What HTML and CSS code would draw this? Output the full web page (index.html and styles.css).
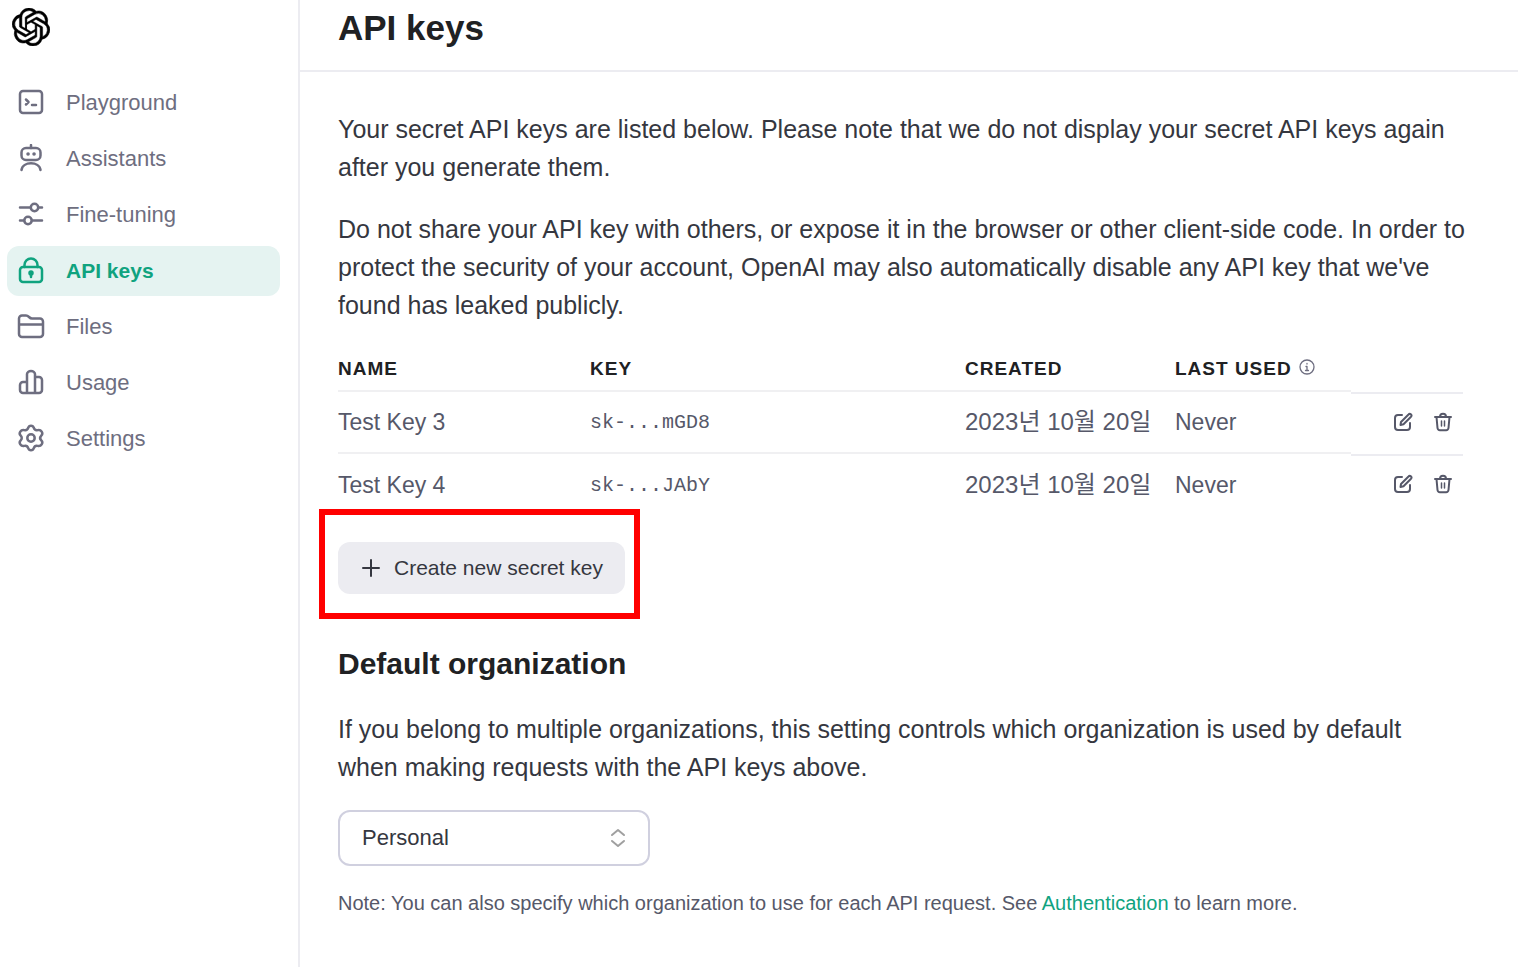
FILE: index.html
```html
<!DOCTYPE html>
<html lang="en">
<head>
<meta charset="utf-8">
<title>API keys</title>
<link rel="stylesheet" href="styles.css">
</head>
<body>
<svg class="sprite" aria-hidden="true">
  <symbol id="edit" viewBox="0 0 20 20"><path d="M9 3H5a3 3 0 0 0-3 3v9a3 3 0 0 0 3 3h9a3 3 0 0 0 3-3v-4"/><path d="M8 10 15.500 2.500a1.600 1.600 0 0 1 2.500 2.200L10.500 12.300 7.500 13z"/></symbol>
  <symbol id="trash" viewBox="0 0 20 20"><path d="M2 5h16M3.500 5l1 11a2.500 2.500 0 0 0 2.500 2.200h6a2.500 2.500 0 0 0 2.500-2.200l1-11M7 5C7 .8 13 .8 13 5"/><path class="slats" d="M8.500 9v5M11.500 9v5"/></symbol>
</svg>
<div class="app">
  <aside class="sidebar">
    <a class="logo" href="#" aria-label="OpenAI">
      <svg viewBox="0 0 24 24"><path d="M22.2819 9.8211a5.9847 5.9847 0 0 0-.5157-4.9108 6.0462 6.0462 0 0 0-6.5098-2.9A6.0651 6.0651 0 0 0 4.9807 4.1818a5.9847 5.9847 0 0 0-3.9977 2.9 6.0462 6.0462 0 0 0 .7427 7.0966 5.98 5.98 0 0 0 .511 4.9107 6.051 6.051 0 0 0 6.5146 2.9001A5.9847 5.9847 0 0 0 13.2599 24a6.0557 6.0557 0 0 0 5.7718-4.2058 5.9894 5.9894 0 0 0 3.9977-2.9001 6.0557 6.0557 0 0 0-.7475-7.0729zm-9.022 12.6081a4.4755 4.4755 0 0 1-2.8764-1.0408l.1419-.0804 4.7783-2.7582a.7948.7948 0 0 0 .3927-.6813v-6.7369l2.02 1.1686a.071.071 0 0 1 .038.052v5.5826a4.504 4.504 0 0 1-4.4945 4.4944zm-9.6607-4.1254a4.4708 4.4708 0 0 1-.5346-3.0137l.142.0852 4.783 2.7582a.7712.7712 0 0 0 .7806 0l5.8428-3.3685v2.3324a.0804.0804 0 0 1-.0332.0615L9.74 19.9502a4.4992 4.4992 0 0 1-6.1408-1.6464zM2.3408 7.8956a4.485 4.485 0 0 1 2.3655-1.9728V11.6a.7664.7664 0 0 0 .3879.6765l5.8144 3.3543-2.0201 1.1685a.0757.0757 0 0 1-.071 0l-4.8303-2.7865A4.504 4.504 0 0 1 2.3408 7.872zm16.5963 3.8558L13.1038 8.364 15.1192 7.2a.0757.0757 0 0 1 .071 0l4.8303 2.7913a4.4944 4.4944 0 0 1-.6765 8.1042v-5.6772a.79.79 0 0 0-.407-.667zm2.0107-3.0231l-.142-.0852-4.7735-2.7818a.7759.7759 0 0 0-.7854 0L9.409 9.2297V6.8974a.0662.0662 0 0 1 .0284-.0615l4.8303-2.7866a4.4992 4.4992 0 0 1 6.6802 4.66zM8.3065 12.863l-2.02-1.1638a.0804.0804 0 0 1-.038-.0567V6.0742a4.4992 4.4992 0 0 1 7.3757-3.4537l-.142.0805L8.704 5.459a.7948.7948 0 0 0-.3927.6813zm1.0976-2.3654l2.602-1.4998 2.6069 1.4998v2.9994l-2.5974 1.4997-2.6067-1.4997Z"/></svg>
    </a>
    <nav class="nav">
      <a class="nav-item" href="#"><svg class="icon" viewBox="0 0 30 30"><rect x="4" y="3" width="22" height="22" rx="3"/><path d="m10 11.500 2.500 2.500-2.500 2.500M16 17h4"/></svg>Playground</a>
      <a class="nav-item" href="#"><svg class="icon" viewBox="0 0 30 30"><rect x="5.500" y="4" width="19" height="12" rx="4.500"/><path d="M15 1v3M5.500 26c1-9 18-9 19 0"/><path class="dots" d="M12 10h.1M18 10h.1"/></svg>Assistants</a>
      <a class="nav-item" href="#"><svg class="icon" viewBox="0 0 30 30"><circle cx="18.500" cy="7.500" r="3.700"/><circle cx="12" cy="20.500" r="3.700"/><path d="M4 7.500h10.500M22.500 7.500h3.500M4 20.500h4M16 20.500h10"/></svg>Fine-tuning</a>
      <a class="nav-item active" href="#" aria-current="page"><svg class="icon" viewBox="0 0 30 30"><rect x="4" y="11" width="22" height="15" rx="3"/><path d="M8.500 11V9a6.500 6.500 0 0 1 13 0v2M15 17v4"/><circle class="solid" cx="15" cy="17" r="1.500"/></svg>API keys</a>
      <a class="nav-item" href="#"><svg class="icon" viewBox="0 0 30 30"><path d="M3 22V6.500a3 3 0 0 1 3-3h4c3 0 3 3 6 3h8a3 3 0 0 1 3 3V22a3 3 0 0 1-3 3H6a3 3 0 0 1-3-3zM3 12.500h24"/></svg>Files</a>
      <a class="nav-item" href="#"><svg class="icon" viewBox="0 0 30 30"><path d="M11 25V6a4 3 0 0 1 8 0v19M11 14H7a3 3 0 0 0-3 3v5a3 3 0 0 0 3 3h16a3 3 0 0 0 3-3V12a3 3 0 0 0-3-3h-4"/></svg>Usage</a>
      <a class="nav-item" href="#"><svg class="icon" viewBox="0 0 30 30"><path d="M12.300 3.700C13 1 17 1 17.700 3.700c.6 1.800 2.300 2.800 4 2.400 3.500-.8 6 3.200 3.600 5.500-1.400 1.400-1.400 3.400 0 4.800 2.400 2.300-.1 6.300-3.600 5.500-1.700-.4-3.400.6-4 2.400-.7 2.700-4.700 2.700-5.400 0-.6-1.800-2.300-2.800-4-2.400-3.500.8-6-3.200-3.600-5.500 1.400-1.400 1.400-3.400 0-4.800-2.400-2.300.1-6.300 3.600-5.500 1.700.4 3.400-.6 4-2.400z"/><circle cx="15" cy="14" r="3.700"/></svg>Settings</a>
    </nav>
  </aside>
  <main class="main">
    <header class="header"><h1>API keys</h1></header>
    <div class="content">
      <p>Your secret API keys are listed below. Please note that we do not display your secret API keys again<br>after you generate them.</p>
      <p>Do not share your API key with others, or expose it in the browser or other client-side code. In order to<br>protect the security of your account, OpenAI may also automatically disable any API key that we've<br>found has leaked publicly.</p>
      <table class="keys">
        <colgroup><col class="col-name"><col class="col-key"><col class="col-created"><col class="col-used"><col class="col-actions"></colgroup>
        <thead>
          <tr><th>NAME</th><th>KEY</th><th>CREATED</th><th>LAST USED <svg class="info" viewBox="0 0 16 16"><circle cx="8" cy="8" r="7"/><path d="M8 7.500v4M8 4.500v.5M7 7.500h1M6.500 11.500h3"/></svg></th><th aria-label="Actions"></th></tr>
        </thead>
        <tbody>
          <tr><td>Test Key 3</td><td class="mono">sk-...mGD8</td><td class="date">2023년 10월 20일</td><td>Never</td><td><div class="actions"><button aria-label="Edit"><svg><use href="#edit"/></svg></button><button aria-label="Delete"><svg><use href="#trash"/></svg></button></div></td></tr>
          <tr><td>Test Key 4</td><td class="mono">sk-...JAbY</td><td class="date">2023년 10월 20일</td><td>Never</td><td><div class="actions"><button aria-label="Edit"><svg><use href="#edit"/></svg></button><button aria-label="Delete"><svg><use href="#trash"/></svg></button></div></td></tr>
        </tbody>
      </table>
      <div class="create">
        <button class="create-button"><svg viewBox="0 0 18 18"><path d="M9 1v16M1 9h16"/></svg>Create new secret key</button>
      </div>
      <h2><label for="org">Default organization</label></h2>
      <p>If you belong to multiple organizations, this setting controls which organization is used by default<br>when making requests with the API keys above.</p>
      <div class="select">
        <select id="org"><option>Personal</option></select>
        <svg viewBox="0 0 16 20"><path d="m2 7 6-5 6 5M2 13l6 5 6-5"/></svg>
      </div>
      <p class="note">Note: You can also specify which organization to use for each API request. See <a href="#">Authentication</a> to learn more.</p>
    </div>
  </main>
</div>
</body>
</html>
```
FILE: styles.css
```css
* { box-sizing: border-box; }
body {
  margin: 0;
  background: #fff;
  color: #353740;
  font-family: "Liberation Sans", "Noto Sans CJK KR", sans-serif;
  font-size: 25px;
  line-height: 38px;
}
button, select { font: inherit; color: inherit; }
svg { fill: none; stroke: currentColor; stroke-width: 2; stroke-linecap: round; stroke-linejoin: round; flex: none; }
.sprite { position: absolute; width: 0; height: 0; }
.app { display: flex; min-height: 100vh; }

.sidebar { flex: none; width: 300px; padding: 8px 18px 8px 7px; border-right: 2px solid #ececf1; }
.logo { display: block; width: 38px; height: 38px; margin: 0 0 32px 5px; color: #000; }
.logo svg { display: block; width: 38px; height: 38px; fill: currentColor; stroke-width: 0.3; }
.nav { display: flex; flex-direction: column; gap: 6px; }
.nav-item {
  display: flex;
  align-items: center;
  gap: 20px;
  height: 50px;
  padding: 0 9px;
  border-radius: 12px;
  color: #6e6e80;
  font-size: 22px;
  text-decoration: none;
}
.nav-item.active { background: #e5f3f1; color: #10a37f; font-size: 21px; font-weight: 700; }
.icon { width: 30px; height: 30px; stroke-width: 2.5; }
.dots { stroke-width: 3.5; }
.solid { fill: currentColor; }

.main { flex: 1; min-width: 0; }
.header { height: 72px; padding: 8px 38px; border-bottom: 2px solid #ececf1; }
h1 { margin: 0; color: #202123; font-size: 35px; line-height: 40px; }
.content { padding: 38px 55px 38px 38px; }
p { margin: 0 -20px 24px 0; }

.keys { width: 100%; table-layout: fixed; border-spacing: 0; }
.col-name { width: 252px; }
.col-key { width: 375px; }
.col-created { width: 210px; }
.col-actions { width: 112px; }
th, td { padding: 0; text-align: left; white-space: nowrap; }
th { height: 44px; color: #202123; font-size: 19px; letter-spacing: 1px; }
td { height: 62px; color: #565869; font-size: 23px; }
th:not(:last-child), tbody tr:first-child td:not(:last-child) { border-bottom: 2px solid #f0f0f2; }
td:last-child { border-top: 2px solid #ececf1; }
td.mono { padding-top: 2px; font-family: "Liberation Mono", monospace; font-size: 20px; }
td.date { font-size: 24px; }
.info { width: 16px; height: 16px; margin-left: 1px; stroke-width: 1.3; color: #6e6e80; }
.actions { display: flex; justify-content: flex-end; gap: 20px; padding: 0 10px 4px 0; color: #565869; }
.actions button { display: flex; padding: 0; border: 0; background: none; }
.actions svg { width: 20px; height: 20px; }
.slats { stroke-width: 1.5; }

.create { position: relative; width: fit-content; margin: 26px 0 50px; }
.create::after {
  content: "";
  position: absolute;
  inset: -33px -15px -25px -19px;
  border: 6px solid #f00;
  pointer-events: none;
}
.create-button {
  display: flex;
  align-items: center;
  gap: 14px;
  height: 52px;
  padding: 0 22px 0 24px;
  border: 0;
  border-radius: 12px;
  background: #ececf1;
  font-size: 21px;
}
.create-button svg { width: 18px; height: 18px; }
h2 { margin: 0 0 26px; color: #202123; font-size: 30px; line-height: 40px; }
.select { position: relative; width: 312px; margin-bottom: 18px; }
.select select {
  display: block;
  width: 100%;
  height: 56px;
  padding: 0 22px;
  border: 2px solid #d0d0df;
  border-radius: 12px;
  background: #fff;
  font-size: 22px;
  appearance: none;
}
.select svg { position: absolute; top: 18px; right: 24px; width: 16px; height: 20px; color: #a0a0a0; pointer-events: none; }
.note { margin: 0; color: #565869; font-size: 20px; }
.note a { color: #10a37f; text-decoration: none; }
```
